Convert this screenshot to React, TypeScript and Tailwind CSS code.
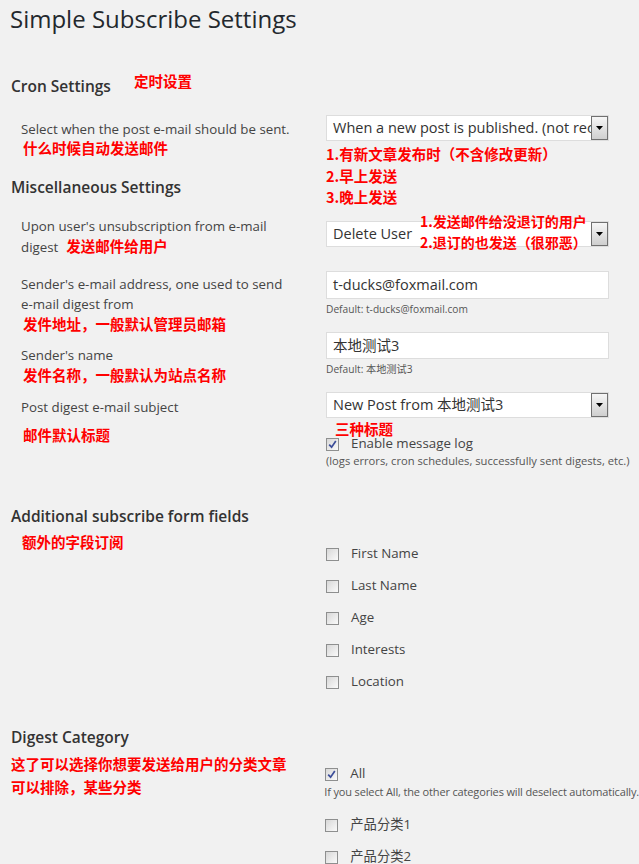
import React from "react";

const red = "font-['Noto_Sans_CJK_SC',sans-serif] font-bold text-[#ff0000] text-[14.5px]";

const Box = ({ checked }: { checked?: boolean }) => (
  <span className="w-[13px] h-[13px] border border-[#8e8f8f] bg-linear-to-br from-[#d8d8d8] to-[#fafafa] flex items-center justify-center shrink-0">
    {checked && (
      <svg width="9" height="9" viewBox="0 0 9 9">
        <path d="M1.2 4.6 L3.6 7.2 L7.8 1" stroke="#3b4d99" strokeWidth="1.7" fill="none" />
      </svg>
    )}
  </span>
);

const Check = ({ label, checked }: { label: string; checked?: boolean }) => (
  <div className="flex items-center h-[32px]">
    <Box checked={checked} />
    <span className="ml-[12px]">{label}</span>
  </div>
);

const Select = ({ value }: { value: string }) => (
  <div className="relative w-[283px] h-[26px] bg-white border border-[#dddddd] flex items-center overflow-hidden">
    <span className="pl-[6px] whitespace-nowrap text-[14.5px] text-[#333]">{value}</span>
    <span className="absolute right-0 top-0 h-full w-[17px] border border-[#707070] bg-linear-to-b from-[#f6f6f6] to-[#cfcfcf] flex items-center justify-center">
      <svg width="7" height="4" viewBox="0 0 7 4">
        <path d="M0 0H7L3.5 4Z" fill="#000" />
      </svg>
    </span>
  </div>
);

const Input = ({ value }: { value: string }) => (
  <div className="w-[283px] h-full bg-white border border-[#dddddd] flex items-center pl-[6px] text-[14.5px] text-[#333]">
    {value}
  </div>
);

const Heading = ({ children }: { children: React.ReactNode }) => (
  <h2 className="relative pl-[1px] h-[20px] leading-[20px] text-[15.5px] font-semibold text-[#333]">{children}</h2>
);

export default function App() {
  return (
    <div className="min-h-[864px] bg-[#f1f1f1] pl-[10px] font-['Open_Sans','Noto_Sans_CJK_SC',sans-serif] text-[#444] text-[13.3px] overflow-hidden">
      <h1 className="h-[38px] leading-[38px] text-[24px] text-[#23282d]">Simple Subscribe Settings</h1>

      {/* cron */}
      <div className="mt-[38px]">
        <Heading>
          Cron Settings
          <span className={`absolute left-[124px] top-[-5px] ${red}`}>定时设置</span>
        </Heading>
      </div>
      <div className="flex mt-[19px]">
        <div className="w-[316px] pl-[11px] pt-[4px]">
          <p className="leading-[20px]">Select when the post e-mail should be sent.</p>
          <p className={`leading-[18px] pl-[2px] ${red}`}>什么时候自动发送邮件</p>
        </div>
        <div className="relative">
          <Select value="When a new post is published. (not recommended)" />
          <div className={`absolute left-0 top-[28px] leading-[21.5px] whitespace-nowrap ${red}`}>
            <p>1.有新文章发布时（不含修改更新）</p>
            <p>2.早上发送</p>
            <p>3.晚上发送</p>
          </div>
        </div>
      </div>

      {/* misc */}
      <div className="mt-[20px]">
        <Heading>Miscellaneous Settings</Heading>
      </div>
      <div className="flex mt-[20px]">
        <div className="w-[316px] pl-[11px] leading-[19px]">
          <p>Upon user's unsubscription from e-mail</p>
          <p>
            digest<span className={`ml-[8px] ${red}`}>发送邮件给用户</span>
          </p>
        </div>
        <div className="relative pt-[4px]">
          <Select value="Delete User" />
          <div className={`absolute left-[94px] top-[-6px] leading-[21px] whitespace-nowrap ${red} text-[14px]`}>
            <p>1.发送邮件给没退订的用户</p>
            <p>2.退订的也发送（很邪恶）</p>
          </div>
        </div>
      </div>

      <div className="flex mt-[14px] h-[61px]">
        <div className="w-[316px] pl-[11px] pt-[3px] leading-[20px]">
          <p>Sender's e-mail address, one used to send</p>
          <p>e-mail digest from</p>
          <p className={`pl-[2px] ${red}`}>发件地址，一般默认管理员邮箱</p>
        </div>
        <div>
          <div className="h-[28px]">
            <Input value="t-ducks@foxmail.com" />
          </div>
          <p className="mt-[3px] leading-[14px] text-[10.2px] text-[#555]">Default: t-ducks@foxmail.com</p>
        </div>
      </div>

      <div className="flex h-[60px]">
        <div className="w-[316px] pl-[11px] pt-[13px] leading-[20px]">
          <p>Sender's name</p>
          <p className={`pl-[2px] ${red}`}>发件名称，一般默认为站点名称</p>
        </div>
        <div>
          <div className="h-[27px]">
            <Input value="本地测试3" />
          </div>
          <p className="mt-[3px] leading-[14px] text-[10.2px] text-[#555]">Default: 本地测试3</p>
        </div>
      </div>

      <div className="flex">
        <div className="w-[316px] pl-[11px] pt-[5px] leading-[20px]">
          <p>Post digest e-mail subject</p>
          <p className={`mt-[8px] pl-[2px] ${red}`}>邮件默认标题</p>
        </div>
        <div className="relative">
          <Select value="New Post from 本地测试3" />
          <p className={`absolute left-[9px] top-[28px] leading-[18px] ${red}`}>三种标题</p>
          <div className="flex items-center h-[16px] mt-[18px]">
            <Box checked />
            <span className="ml-[12px]">Enable message log</span>
          </div>
          <p className="mt-[2px] leading-[14px] text-[11.2px] text-[#555] whitespace-nowrap">
            (logs errors, cron schedules, successfully sent digests, etc.)
          </p>
        </div>
      </div>

      {/* extra fields */}
      <div className="mt-[38px]">
        <Heading>Additional subscribe form fields</Heading>
      </div>
      <div className="flex mt-[6px]">
        <div className="w-[316px] pl-[12px]">
          <p className={`leading-[20px] ${red}`}>额外的字段订阅</p>
        </div>
        <div className="pt-[6px]">
          <Check label="First Name" />
          <Check label="Last Name" />
          <Check label="Age" />
          <Check label="Interests" />
          <Check label="Location" />
        </div>
      </div>

      {/* categories */}
      <div className="mt-[29px]">
        <Heading>Digest Category</Heading>
      </div>
      <div className="flex mt-[5px]">
        <div className="w-[316px] pl-[1px]">
          <p className={`leading-[23px] ${red}`}>
            这了可以选择你想要发送给用户的分类文章
            <br />
            可以排除，某些分类
          </p>
        </div>
        <div className="pt-[12px]">
          <div className="flex items-center h-[20px]">
            <Box checked />
            <span className="ml-[12px]">All</span>
          </div>
          <p className="mt-[1px] -ml-[1px] leading-[14px] text-[11px] text-[#555] whitespace-nowrap tracking-[-0.15px]">
            If you select All, the other categories will deselect automatically.
          </p>
          <div className="mt-[10px]">
            <Check label="产品分类1" />
            <Check label="产品分类2" />
          </div>
        </div>
      </div>
    </div>
  );
}
